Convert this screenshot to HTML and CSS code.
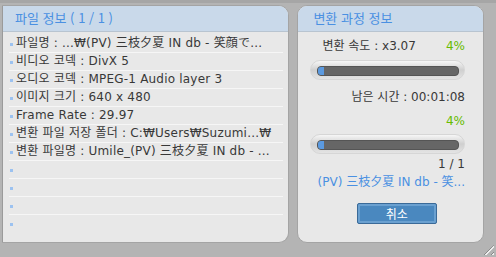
FILE: index.html
```html
<!DOCTYPE html>
<html lang="ko">
<head>
  <meta charset="UTF-8">
  <title>변환</title>
  <link rel="stylesheet" href="styles.css">
</head>
<body>
  <div class="window">
    <div class="panel file-panel">
      <div class="panel-title">파일 정보 ( 1 / 1 )</div>
      <ul class="info-list">
        <li>파일명 : ...₩(PV) 三枝夕夏 IN db - 笑顔で...</li>
        <li>비디오 코덱 : DivX 5</li>
        <li>오디오 코덱 : MPEG-1 Audio layer 3</li>
        <li>이미지 크기 : 640 x 480</li>
        <li>Frame Rate : 29.97</li>
        <li>변환 파일 저장 폴더 : C:₩Users₩Suzumi...₩</li>
        <li>변환 파일명 : Umile_(PV) 三枝夕夏 IN db - ...</li>
        <li></li>
        <li></li>
        <li></li>
        <li></li>
      </ul>
    </div>

    <div class="panel progress-panel">
      <div class="panel-title">변환 과정 정보</div>
      <div class="progress-body">
        <div class="line split">
          <span>변환 속도 : x3.07</span>
          <span class="percent">4%</span>
        </div>
        <div class="track"><div class="bar"><div class="fill" style="width: 4%"></div></div></div>
        <div class="line right time">남은 시간 : 00:01:08</div>
        <div class="line right percent">4%</div>
        <div class="track second"><div class="bar"><div class="fill" style="width: 4%"></div></div></div>
        <div class="line right count">1 / 1</div>
        <div class="line right current">(PV) 三枝夕夏 IN db - 笑...</div>
        <button class="cancel">취소</button>
      </div>
    </div>
  </div>
  <div class="grip"></div>
</body>
</html>
```

FILE: styles.css
```css
html, body {
  margin: 0;
  width: 496px;
  height: 257px;
  overflow: hidden;
}
body {
  background: #b4b4b4;
  border-top: 3px solid #a6a6a6;
  box-sizing: border-box;
  font-family: "DejaVu Sans", "Noto Sans CJK KR", sans-serif;
  font-size: 12px;
  color: #383838;
  position: relative;
}
.window {
  display: flex;
  gap: 8px;
  padding: 2px 12px 0 2px;
}
.panel {
  background: #e8e8e8;
  border: 1px solid #a4a4a4;
  border-radius: 10px;
  height: 238px;
  box-sizing: border-box;
  overflow: hidden;
}
.file-panel {
  width: 288px;
  border-radius: 0 10px 10px 0;
  border-left: 1px solid #9a9a9a;
}
.progress-panel {
  width: 187px;
}
.panel-title {
  height: 25px;
  line-height: 24px;
  background: #c9d9ea;
  color: #4a90e2;
  font-family: "Noto Sans CJK KR", sans-serif;
  font-size: 13px;
  padding-left: 12px;
  border-bottom: 1px solid #b8c4d0;
}
.progress-panel .panel-title {
  padding-left: 15px;
}
.info-list {
  list-style: none;
  margin: 3px 0 0;
  padding: 0 5px 0 6px;
}
.info-list li {
  height: 17px;
  line-height: 17px;
  border-bottom: 1px solid #f6f6f6;
  padding-left: 7px;
  position: relative;
  white-space: nowrap;
  overflow: hidden;
  letter-spacing: 0.2px;
}
.info-list li::before {
  content: "";
  position: absolute;
  left: 1px;
  top: 8px;
  width: 3px;
  height: 3px;
  background: #9cc2f0;
}
.info-list li:last-child {
  border-bottom: none;
}
.progress-body {
  display: flex;
  flex-direction: column;
  padding: 5px 18px 0 12px;
}
.line {
  height: 18px;
  line-height: 18px;
  white-space: nowrap;
}
.split {
  display: flex;
  justify-content: space-between;
  padding-left: 12px;
}
.right {
  text-align: right;
}
.percent {
  color: #66bb00;
}
.current {
  color: #4a90e2;
  overflow: hidden;
}
.track {
  height: 20px;
  margin-top: 5px;
  border-radius: 10px;
  background: linear-gradient(#f6f6f6, #cfcfcf 50%, #e4e4e4);
  border: 1px solid #d6d6d6;
  box-sizing: border-box;
  padding: 5px 5px 0 6px;
}
.track.second {
  margin-top: 4px;
}
.bar {
  height: 8px;
  border-radius: 4px;
  background: #666;
  border: 1px solid #555;
  overflow: hidden;
}
.fill {
  height: 100%;
  background: #5b9ae0;
}
.time {
  margin-top: 8px;
}
.percent.right {
  margin-top: 6px;
}
.count {
  margin-top: 1px;
}
.cancel {
  align-self: center;
  margin: 12px 0 0 18px;
  width: 80px;
  height: 21px;
  background: #4a88bf;
  border: 1px solid #3a6a98;
  border-radius: 2px;
  box-shadow: inset 0 0 0 2px #6aa0d0;
  color: #fff;
  font-family: "Noto Sans CJK KR", sans-serif;
  font-size: 12px;
  padding: 0;
}
.grip {
  position: absolute;
  right: 2px;
  bottom: 2px;
  width: 12px;
  height: 10px;
  background: repeating-linear-gradient(135deg, transparent 0 3px, #888 3px 4px, #eee 4px 5px);
  clip-path: polygon(100% 0, 100% 100%, 0 100%);
}
```
